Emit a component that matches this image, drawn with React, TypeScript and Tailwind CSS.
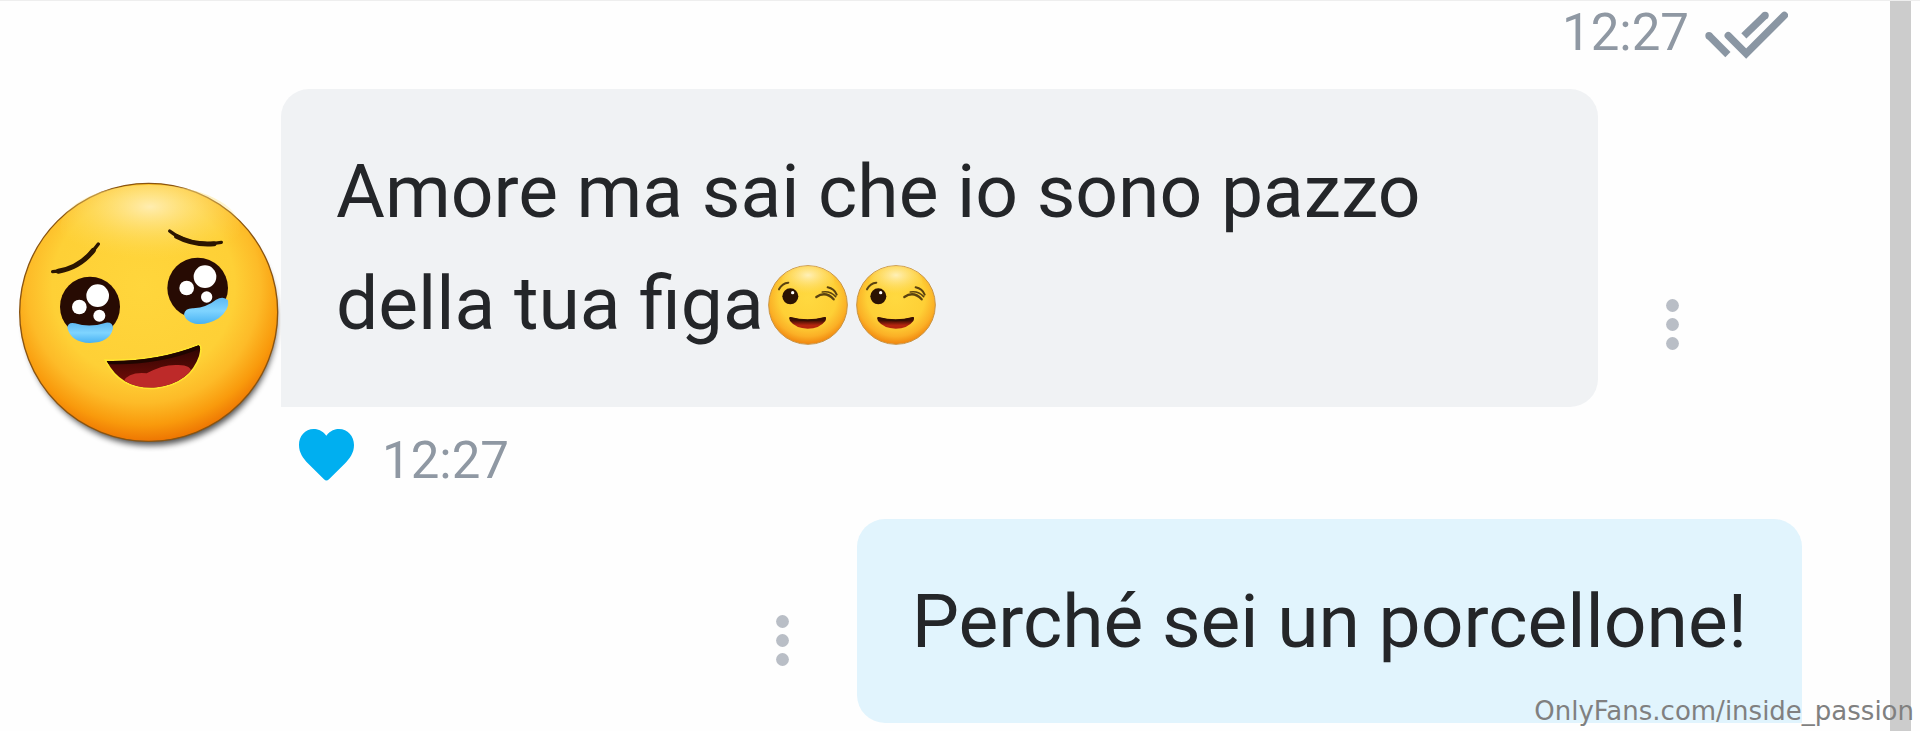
import type { ReactNode } from "react";

function TearyFace() {
  return (
    <svg viewBox="0 0 843 900" className="block w-[281px] h-[300px]" role="img" aria-label="Avatar">
      <defs>
        <radialGradient id="tearyBase" cx="0.48" cy="0.4" r="0.61">
          <stop offset="0" stopColor="#ffd63c" />
          <stop offset="0.58" stopColor="#fed036" />
          <stop offset="0.74" stopColor="#fdbb28" />
          <stop offset="0.88" stopColor="#f99a0c" />
          <stop offset="1" stopColor="#ec7000" />
        </radialGradient>
        <radialGradient id="tearyShine" cx="0.5" cy="0.25" r="0.6">
          <stop offset="0" stopColor="#ffedb0" />
          <stop offset="1" stopColor="#ffdb55" stopOpacity="0" />
        </radialGradient>
        <linearGradient id="tearyTear" x1="0" y1="0" x2="0" y2="1">
          <stop offset="0" stopColor="#5fb8f2" />
          <stop offset="0.5" stopColor="#7fd4ff" />
          <stop offset="1" stopColor="#48b2f3" />
        </linearGradient>
        <linearGradient id="tearyMouth" x1="0" y1="0" x2="0" y2="1">
          <stop offset="0" stopColor="#2a0502" />
          <stop offset="1" stopColor="#7a0d08" />
        </linearGradient>
        <clipPath id="tearyMouthClip">
          <path d="M320 603 Q470 606 596 556 Q604 560 597 588 Q570 668 470 682 Q365 690 320 603Z" />
        </clipPath>
        <filter id="tearyShadow" x="-20%" y="-20%" width="140%" height="140%">
          <feGaussianBlur stdDeviation="10" />
        </filter>
      </defs>
      <circle cx="452" cy="478" r="378" fill="#000" opacity="0.7" filter="url(#tearyShadow)" />
      <circle cx="446" cy="457" r="387" fill="url(#tearyBase)" stroke="#8a5410" strokeWidth="4" />
      <ellipse cx="450" cy="205" rx="270" ry="130" fill="url(#tearyShine)" />
      <g fill="none" stroke="#2b1500" strokeLinecap="round">
        <path d="M158 335 Q238 332 295 252" strokeWidth="10" />
        <path d="M175 334 Q240 322 280 271" strokeWidth="15" />
        <path d="M509 213 Q570 263 664 247" strokeWidth="10" />
        <path d="M530 229 Q580 256 642 251" strokeWidth="15" />
      </g>
      <circle cx="270" cy="440" r="90" fill="#270b03" />
      <circle cx="293" cy="407" r="34" fill="#fff" />
      <circle cx="238" cy="441" r="22" fill="#fff" />
      <circle cx="298" cy="467" r="18" fill="#fff" />
      <path
        d="M202 503 Q204 485 225 490 Q270 504 318 488 Q339 486 339 505 Q330 548 270 549 Q212 546 202 503Z"
        fill="url(#tearyTear)"
      />
      <circle cx="593" cy="384" r="91" fill="#270b03" />
      <circle cx="615" cy="350" r="34" fill="#fff" />
      <circle cx="560" cy="384" r="22" fill="#fff" />
      <circle cx="620" cy="411" r="17" fill="#fff" />
      <path
        d="M552 463 Q555 444 580 445 Q622 441 648 419 Q670 406 684 421 Q690 448 656 475 Q620 497 585 491 Q557 485 552 463Z"
        fill="url(#tearyTear)"
      />
      <path
        d="M320 603 Q470 606 596 556 Q604 560 597 588 Q570 668 470 682 Q365 690 320 603Z"
        fill="url(#tearyMouth)"
        stroke="#ffe630"
        strokeWidth="10"
        paintOrder="stroke"
      />
      <g clipPath="url(#tearyMouthClip)">
        <path d="M370 665 Q385 635 440 640 Q490 612 535 615 Q575 615 575 640 L520 700 L380 700Z" fill="#bd2a29" />
        <path d="M318 600 Q470 603 600 552 L600 566 Q470 618 324 612Z" fill="#1f0500" />
      </g>
    </svg>
  );
}

function WinkFace() {
  return (
    <svg
      viewBox="0 0 246 246"
      className="inline-block w-[82px] h-[82px] mx-[3px] align-[-17px]"
      role="img"
      aria-label="😉"
    >
      <defs>
        <radialGradient id="winkBase" cx="0.5" cy="0.4" r="0.61">
          <stop offset="0" stopColor="#ffd940" />
          <stop offset="0.6" stopColor="#fed036" />
          <stop offset="0.82" stopColor="#fbb026" />
          <stop offset="1" stopColor="#ef7f0a" />
        </radialGradient>
        <radialGradient id="winkShine" cx="0.5" cy="0.3" r="0.6">
          <stop offset="0" stopColor="#fff0b8" />
          <stop offset="1" stopColor="#ffe070" stopOpacity="0" />
        </radialGradient>
        <linearGradient id="winkMouth" x1="0" y1="0" x2="0" y2="1">
          <stop offset="0.3" stopColor="#461004" />
          <stop offset="0.7" stopColor="#b5260f" />
        </linearGradient>
      </defs>
      <circle cx="123" cy="123" r="118" fill="url(#winkBase)" stroke="#c99544" strokeWidth="3" />
      <ellipse cx="123" cy="52" rx="80" ry="46" fill="url(#winkShine)" />
      <circle cx="70" cy="97" r="24" fill="#2b1203" />
      <circle cx="77" cy="86" r="5" fill="#fff" />
      <g fill="none" stroke="#5a4210" strokeLinecap="round" strokeWidth="6">
        <path d="M36 76 Q46 57 64 56" />
        <path d="M182 70 Q202 74 209 92" />
        <path d="M148 99 Q176 80 200 106" strokeWidth="7" />
        <path d="M166 84 Q190 80 206 98" strokeWidth="5" />
      </g>
      <path
        d="M69 160 Q122 174 174 160 Q180 161 175 171 Q158 194 122 194 Q86 193 69 171 Q65 162 69 160Z"
        fill="url(#winkMouth)"
      />
      <path d="M70 162 Q122 176 174 162" fill="none" stroke="#361004" strokeWidth="6" strokeLinecap="round" />
    </svg>
  );
}

function DoubleCheck() {
  return (
    <svg viewBox="0 -12 250 156" className="block w-[83px] h-[52px]" role="img" aria-label="Letto">
      <g fill="none" stroke="#8a96a3" strokeWidth="22">
        <path d="M70 74 L124 128 L239 13" strokeLinecap="round" />
        <path d="M12 74 L69 131" />
        <path d="M181 13 L117 75" />
      </g>
      <circle cx="12" cy="74" r="11" fill="#8a96a3" />
      <circle cx="181" cy="13" r="11" fill="#8a96a3" />
    </svg>
  );
}

function Heart() {
  return (
    <svg viewBox="0 0 165 156" className="block w-[55px] h-[52px]" aria-hidden="true">
      <path
        d="M82 20 C69 4 56 0 44 0 C18 0 0 21 0 48 C0 71 12 88 28 104 L75 151 Q82 158 90 151 L137 104 C153 88 165 71 165 48 C165 21 146 0 120 0 C108 0 95 4 82 20Z"
        fill="#00aff0"
      />
    </svg>
  );
}

function MoreButton() {
  return (
    <button type="button" aria-label="Altre opzioni" className="shrink-0 w-[52px] mb-[57px] flex justify-center">
      <svg viewBox="0 0 13 51" className="block w-[13px] h-[51px]" fill="#b9bec6">
        <circle cx="6.5" cy="6.5" r="6.4" />
        <circle cx="6.5" cy="25.5" r="6.4" />
        <circle cx="6.5" cy="44.5" r="6.4" />
      </svg>
    </button>
  );
}

function Time({ children }: { children: ReactNode }) {
  return <time className="text-[51px] leading-[64px] text-[#8f98a3]">{children}</time>;
}

export default function App() {
  return (
    <div className="relative min-h-screen flex overflow-hidden bg-[#fefefe] border-t border-[#eeeeee] font-[Roboto,sans-serif] text-[#242629]">
      <main className="flex-1 min-w-0 pr-[88px]">
        <div className="flex justify-end items-center gap-4 pb-6 pr-3.5">
          <Time>12:27</Time>
          <DoubleCheck />
        </div>

        <section className="flex items-start">
          <div className="shrink-0 mt-[71px]">
            <TearyFace />
          </div>
          <div className="flex-1 min-w-0">
            <div className="flex items-end gap-12 mr-[104px]">
              <p className="flex-1 px-[55px] pt-[46px] pb-12 rounded-[28px] rounded-bl-none bg-[#f0f2f4] text-[75px] leading-[112px]">
                Amore ma sai che io sono pazzo della tua figa
                <span className="whitespace-nowrap">
                  <WinkFace />
                  <WinkFace />
                </span>
              </p>
              <MoreButton />
            </div>
            <div className="flex items-start gap-7 mt-[22px] pl-[18px]">
              <Heart />
              <Time>12:27</Time>
            </div>
          </div>
        </section>

        <section className="flex justify-end items-end gap-12 mt-[26px]">
          <MoreButton />
          <p className="px-[55px] py-[46px] rounded-[28px] rounded-br-none bg-[#e1f4fd] text-[75px] leading-[112px]">
            Perché sei un porcellone!
          </p>
        </section>
      </main>

      <div className="shrink-0 w-[21px] mr-[9px] bg-[#cccccc]" />

      <span className="absolute right-1.5 bottom-1 font-['DejaVu_Sans',sans-serif] text-[26px] leading-[32px] text-[#808080]">
        OnlyFans.com/inside_passion
      </span>
    </div>
  );
}
